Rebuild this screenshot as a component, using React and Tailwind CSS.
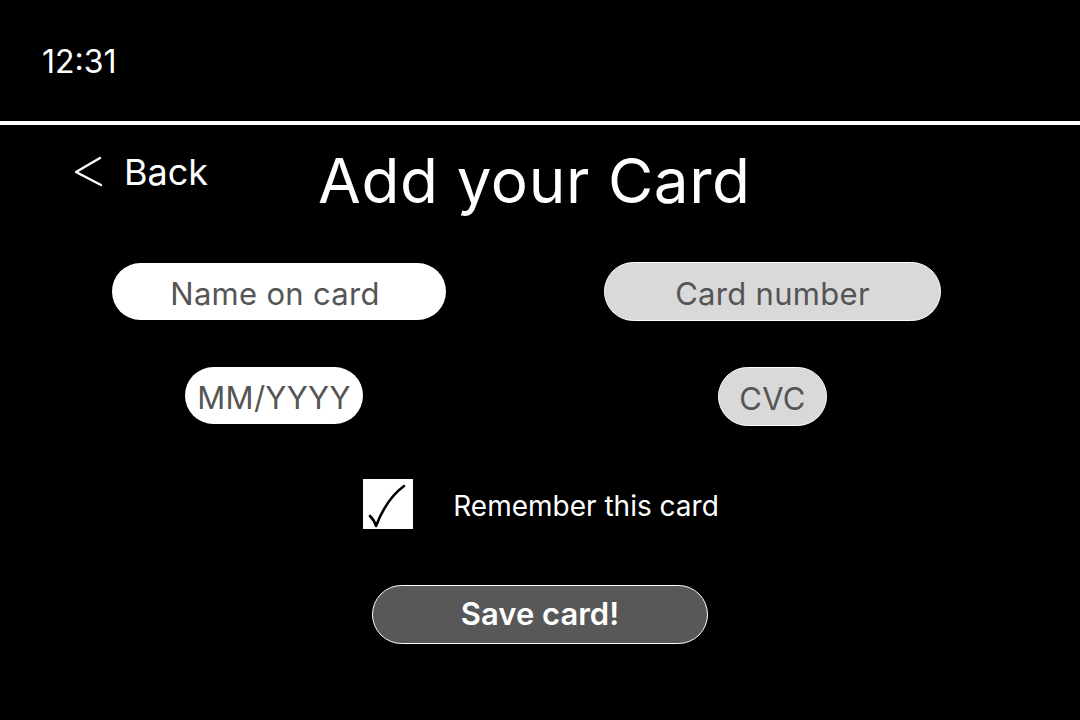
export default function App() {
  return (
    <div className="w-[1080px] h-[720px] bg-black text-white overflow-hidden" style={{ fontFamily: 'Inter, "Noto Sans", sans-serif' }}>
      <div className="h-[121px] flex items-center pl-[42px] pt-[2px]">
        <span className="text-[32px] leading-none">12:31</span>
      </div>
      <div className="h-[4px] bg-white" />

      <div className="flex items-start pt-[25px]">
        <button type="button" className="flex items-center gap-[21px] ml-[73px] mt-[4px] text-white">
          <svg width="30" height="32" viewBox="0 0 30 32" fill="none" stroke="white" strokeWidth="2.4" strokeLinecap="round" strokeLinejoin="round">
            <path d="M27 2 L3 16 L28 29" />
          </svg>
          <span className="text-[36px] leading-none">Back</span>
        </button>
        <h1 className="ml-[110px] text-[62px] leading-none font-normal tracking-[0.6px]">Add your Card</h1>
      </div>

      <div className="flex pl-[112px] gap-[158px] mt-[51px]">
        <div className="w-[334px] flex flex-col items-center gap-[47px]">
          <div className="w-[334px] h-[57px] rounded-full bg-white flex items-center justify-center text-[31px] tracking-[0.3px] text-[#555555] pt-[5px] pr-[8px]">
            Name on card
          </div>
          <div className="w-[178px] h-[57px] rounded-full bg-white flex items-center justify-center text-[31px] tracking-[0.3px] text-[#555555] mr-[10px] pt-[5px]">
            MM/YYYY
          </div>
        </div>
        <div className="w-[337px] flex flex-col items-center gap-[46px] -mt-[1px]">
          <div className="w-[337px] h-[59px] rounded-full bg-[#d9d9d9] border border-white flex items-center justify-center text-[31px] tracking-[0.3px] text-[#555555] pt-[5px]">
            Card number
          </div>
          <div className="w-[109px] h-[59px] rounded-full bg-[#d9d9d9] border border-white flex items-center justify-center text-[31px] tracking-[0.3px] text-[#555555] pt-[5px]">
            CVC
          </div>
        </div>
      </div>

      <div className="flex items-start justify-center gap-[40px] mt-[53px] ml-[2px]">
        <div className="w-[50px] h-[50px] bg-white flex items-center justify-center">
          <svg width="50" height="50" viewBox="0 0 50 50" fill="none" stroke="black" strokeWidth="2.6" strokeLinecap="round" strokeLinejoin="round">
            <path d="M7 37 C 10 40, 12 43, 13 47 C 18 34, 26 18, 41 7" />
          </svg>
        </div>
        <span className="text-[28px] leading-none mt-[13px]">Remember this card</span>
      </div>

      <div className="flex justify-center mt-[56px]">
        <button type="button" className="w-[336px] h-[59px] rounded-full bg-[#585858] border border-white text-white text-[31px] font-semibold flex items-center justify-center">
          Save card!
        </button>
      </div>
    </div>
  )
}
